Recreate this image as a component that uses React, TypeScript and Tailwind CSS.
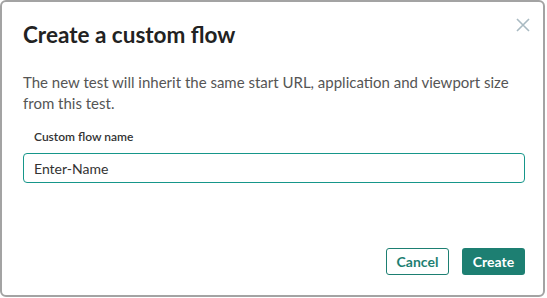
import React, { useState } from 'react';

const App: React.FC = () => {
  const [name, setName] = useState('Enter-Name');

  return (
    <div className="w-[547px] h-[298px] bg-white" style={{ fontFamily: 'Lato, "Noto Sans", sans-serif' }}>
      <div className="relative w-[545px] h-[297px] border-2 border-[#a3a3a3] rounded-[6px] bg-white flex flex-col pl-[21px] pr-[18px]">
        {/* Close button */}
        <button className="absolute right-[13px] top-[15px] w-[15px] h-[15px] flex items-center justify-center text-[#a9bac2]">
          <svg width="14" height="14" viewBox="0 0 14 14" fill="none" stroke="currentColor" strokeWidth="1.6">
            <path d="M1 1 L13 13 M13 1 L1 13" />
          </svg>
        </button>

        <h2 className="mt-[18px] text-[22.5px] leading-[30px] font-bold text-[#222222]">Create a custom flow</h2>

        <p className="mt-[22px] max-w-[495px] text-[15px] leading-[21px] text-[#555555]">
          The new test will inherit the same start URL, application and viewport size from this test.
        </p>

        <label className="mt-[15px] pl-[11px] text-[12px] leading-[16px] font-semibold text-[#333333]">Custom flow name</label>
        <input
          value={name}
          onChange={(e) => setName(e.target.value)}
          className="mt-[8px] h-[30px] w-full border border-[#16968a] rounded-[4px] px-[10px] text-[14px] text-[#333333] outline-none"
        />

        <div className="mt-auto mb-[20px] flex justify-end gap-[13px]">
          <button className="h-[27px] w-[63px] border border-[#1d7f72] rounded-[3px] text-[14px] font-bold text-[#1d7f72] bg-white">
            Cancel
          </button>
          <button className="h-[27px] w-[63px] rounded-[3px] text-[14px] font-bold text-white bg-[#1d7f72]">
            Create
          </button>
        </div>
      </div>
    </div>
  );
};

export default App;
